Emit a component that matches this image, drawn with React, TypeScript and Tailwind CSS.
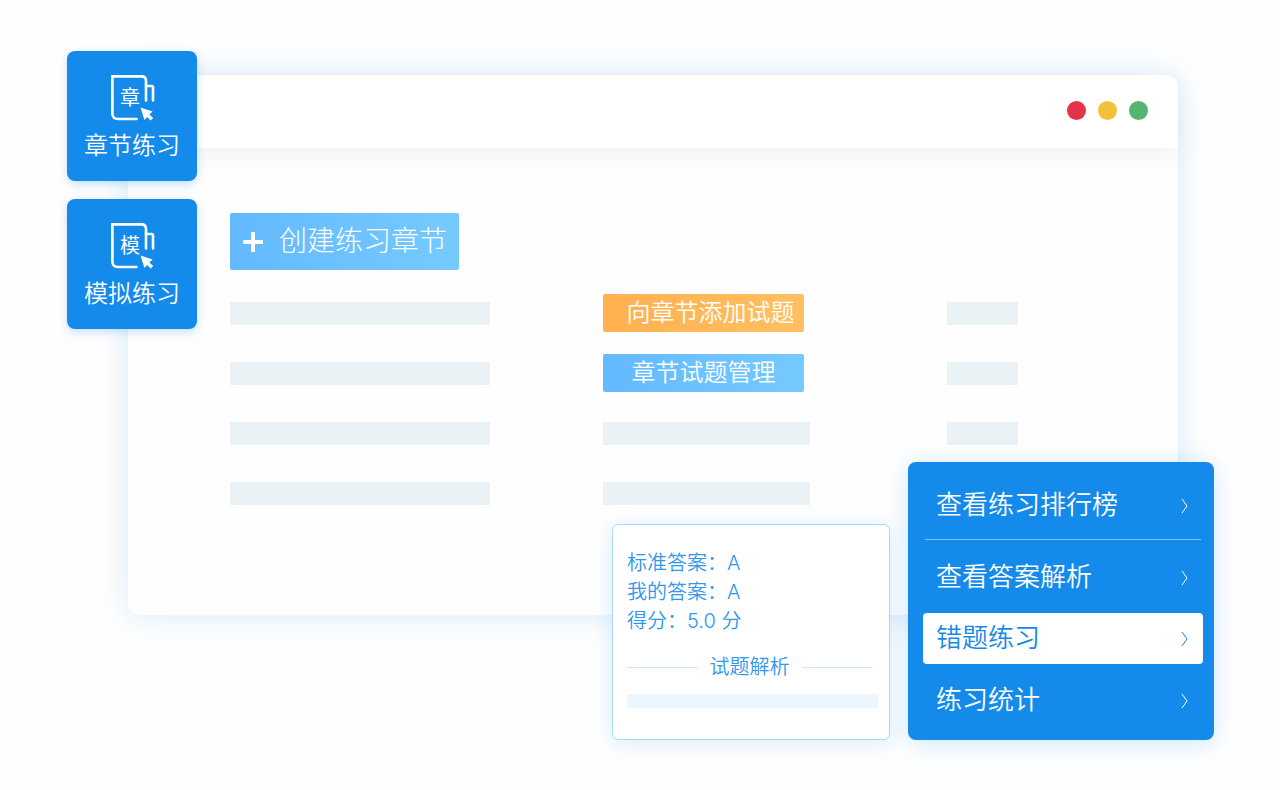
import clsx from "clsx"

const tiles = [
  { glyph: "章", label: "章节练习" },
  { glyph: "模", label: "模拟练习" },
]

const menuItems = [
  { label: "查看练习排行榜", active: false },
  { label: "查看答案解析", active: false },
  { label: "错题练习", active: true },
  { label: "练习统计", active: false },
]

const answers = ["标准答案：A", "我的答案：A", "得分：5.0 分"]

function BookIcon({ glyph }: { glyph: string }) {
  return (
    <svg width="46" height="48" viewBox="0 0 46 48" fill="none" aria-hidden="true">
      <path
        d="M27.5 45H9Q3.4 45 3.4 39.5V2.4H32.5Q37 2.4 37 7V26.5"
        stroke="white"
        strokeWidth="2.6"
        strokeLinecap="round"
      />
      <path d="M37 12H42.6Q44 12 44 13.4V26.5" stroke="white" strokeWidth="2.6" strokeLinecap="round" />
      <path d="M31.5 33.5L43.6 37.6L40.4 40.4L44.2 44L41.8 46.6L38 43L35.4 46Z" fill="white" />
      <text x="21" y="31" fontSize="20" fontWeight="400" textAnchor="middle" fill="white">
        {glyph}
      </text>
    </svg>
  )
}

function Chevron() {
  return (
    <svg width="8" height="16" viewBox="0 0 8 16" fill="none" stroke="currentColor" aria-hidden="true">
      <path d="M1 1L6 8L1 15" />
    </svg>
  )
}

function Bar({ className }: { className: string }) {
  return <div className={clsx("h-[23px] bg-[#eaf2f6]", className)} />
}

function Tiles() {
  return (
    <nav className="absolute -left-[61px] -top-6 flex flex-col gap-[18px]">
      {tiles.map((tile) => (
        <button
          key={tile.label}
          type="button"
          className="flex size-[130px] flex-col items-center rounded-lg bg-[#148aea] pt-[23px] text-white shadow-[0_3px_10px_rgba(20,138,234,0.25)]"
        >
          <BookIcon glyph={tile.glyph} />
          <span className="mt-1 text-2xl leading-10 font-[350]">{tile.label}</span>
        </button>
      ))}
    </nav>
  )
}

function AnswerCard() {
  return (
    <section className="h-[216px] w-[278px] rounded-md border border-[#a9d9fb] bg-white pt-6 pr-[11px] pl-[14px] text-[#2f97ec] shadow-[0_3px_20px_rgba(20,138,234,0.16)]">
      {answers.map((line) => (
        <p key={line} className="text-xl leading-[29px] font-[350]">
          {line}
        </p>
      ))}
      <div className="mt-[17px] flex items-center gap-3 pr-[6px]">
        <span className="h-px flex-1 bg-[#cde8fb]" />
        <h2 className="text-xl leading-[29px] font-[350]">试题解析</h2>
        <span className="h-px flex-1 bg-[#cde8fb]" />
      </div>
      <div className="mt-3 h-[14px] bg-[#ebf6fe]" />
    </section>
  )
}

function Menu() {
  return (
    <nav className="w-[306px] rounded-lg bg-[#148aea] pt-[17px] pr-[11px] pb-3 pl-[15px] text-white shadow-[0_3px_24px_rgba(20,138,234,0.2)]">
      {menuItems.map((item, index) => (
        <div key={item.label}>
          <button
            type="button"
            className={clsx(
              "flex w-full items-center justify-between rounded pr-[14px] pl-[13px] text-left",
              item.active ? "h-[51px] bg-white text-[#148aea]" : "h-[54px]",
              index === 1 && "mt-[11px] mb-2",
              index === 3 && "mt-[10px]"
            )}
          >
            <span className="pb-[2px] text-[26px] leading-[38px] font-[350]">{item.label}</span>
            <Chevron />
          </button>
          {index === 0 && <div className="mx-[2px] mt-[6px] h-px bg-[#84c3f5]" />}
        </div>
      ))}
    </nav>
  )
}

export default function App() {
  return (
    <main className="min-h-screen bg-[#fefefe] pt-[75px] pr-[102px] pb-[175px] pl-32 font-['Inter','Noto_Sans_CJK_SC',sans-serif]">
      <div className="relative">
        <div className="rounded-xl bg-[#fefefe] pb-[92px] shadow-[0_0_32px_rgba(20,138,234,0.16)]">
          {/* Title bar */}
          <header className="flex h-[73px] items-center justify-end gap-3 rounded-t-xl bg-white pr-[30px] pb-[2px] shadow-[0_8px_24px_rgba(40,70,110,0.06)]">
            <span className="size-[19px] rounded-full bg-[#e33348]" />
            <span className="size-[19px] rounded-full bg-[#f4c03c]" />
            <span className="size-[19px] rounded-full bg-[#56b470]" />
          </header>

          <div className="pt-[65px] pr-[160px] pl-[102px]">
            <button
              type="button"
              className="flex h-[57px] w-[229px] items-center gap-4 rounded-xs bg-linear-to-r from-[#64b9ff] to-[#75caff] pl-[13px] text-white"
            >
              <svg width="20" height="20" viewBox="0 0 20 20" stroke="white" strokeWidth="4" aria-hidden="true">
                <path d="M10 0V20M0 10H20" />
              </svg>
              <span className="pb-[2px] text-[28px] leading-10 font-light">创建练习章节</span>
            </button>

            {/* Rows */}
            <div className="mt-[13px] grid auto-rows-[60px] grid-cols-[373fr_344fr_71fr] items-center">
              <Bar className="w-[260px]" />
              <button
                type="button"
                className="h-[38px] w-[201px] rounded-xs bg-linear-to-r from-[#ffb04f] to-[#ffc062] pl-[14px] text-2xl leading-9 font-[350] text-white"
              >
                向章节添加试题
              </button>
              <Bar className="w-full" />

              <Bar className="w-[260px]" />
              <button
                type="button"
                className="h-[38px] w-[201px] rounded-xs bg-linear-to-r from-[#64b9ff] to-[#75caff] text-2xl leading-9 font-[350] text-white"
              >
                章节试题管理
              </button>
              <Bar className="w-full" />

              <Bar className="w-[260px]" />
              <Bar className="w-[207px]" />
              <Bar className="w-full" />

              <Bar className="w-[260px]" />
              <Bar className="w-[207px]" />
            </div>
          </div>
        </div>

        <Tiles />

        <div className="absolute -right-9 -bottom-[125px] flex items-end gap-[18px]">
          <AnswerCard />
          <Menu />
        </div>
      </div>
    </main>
  )
}
